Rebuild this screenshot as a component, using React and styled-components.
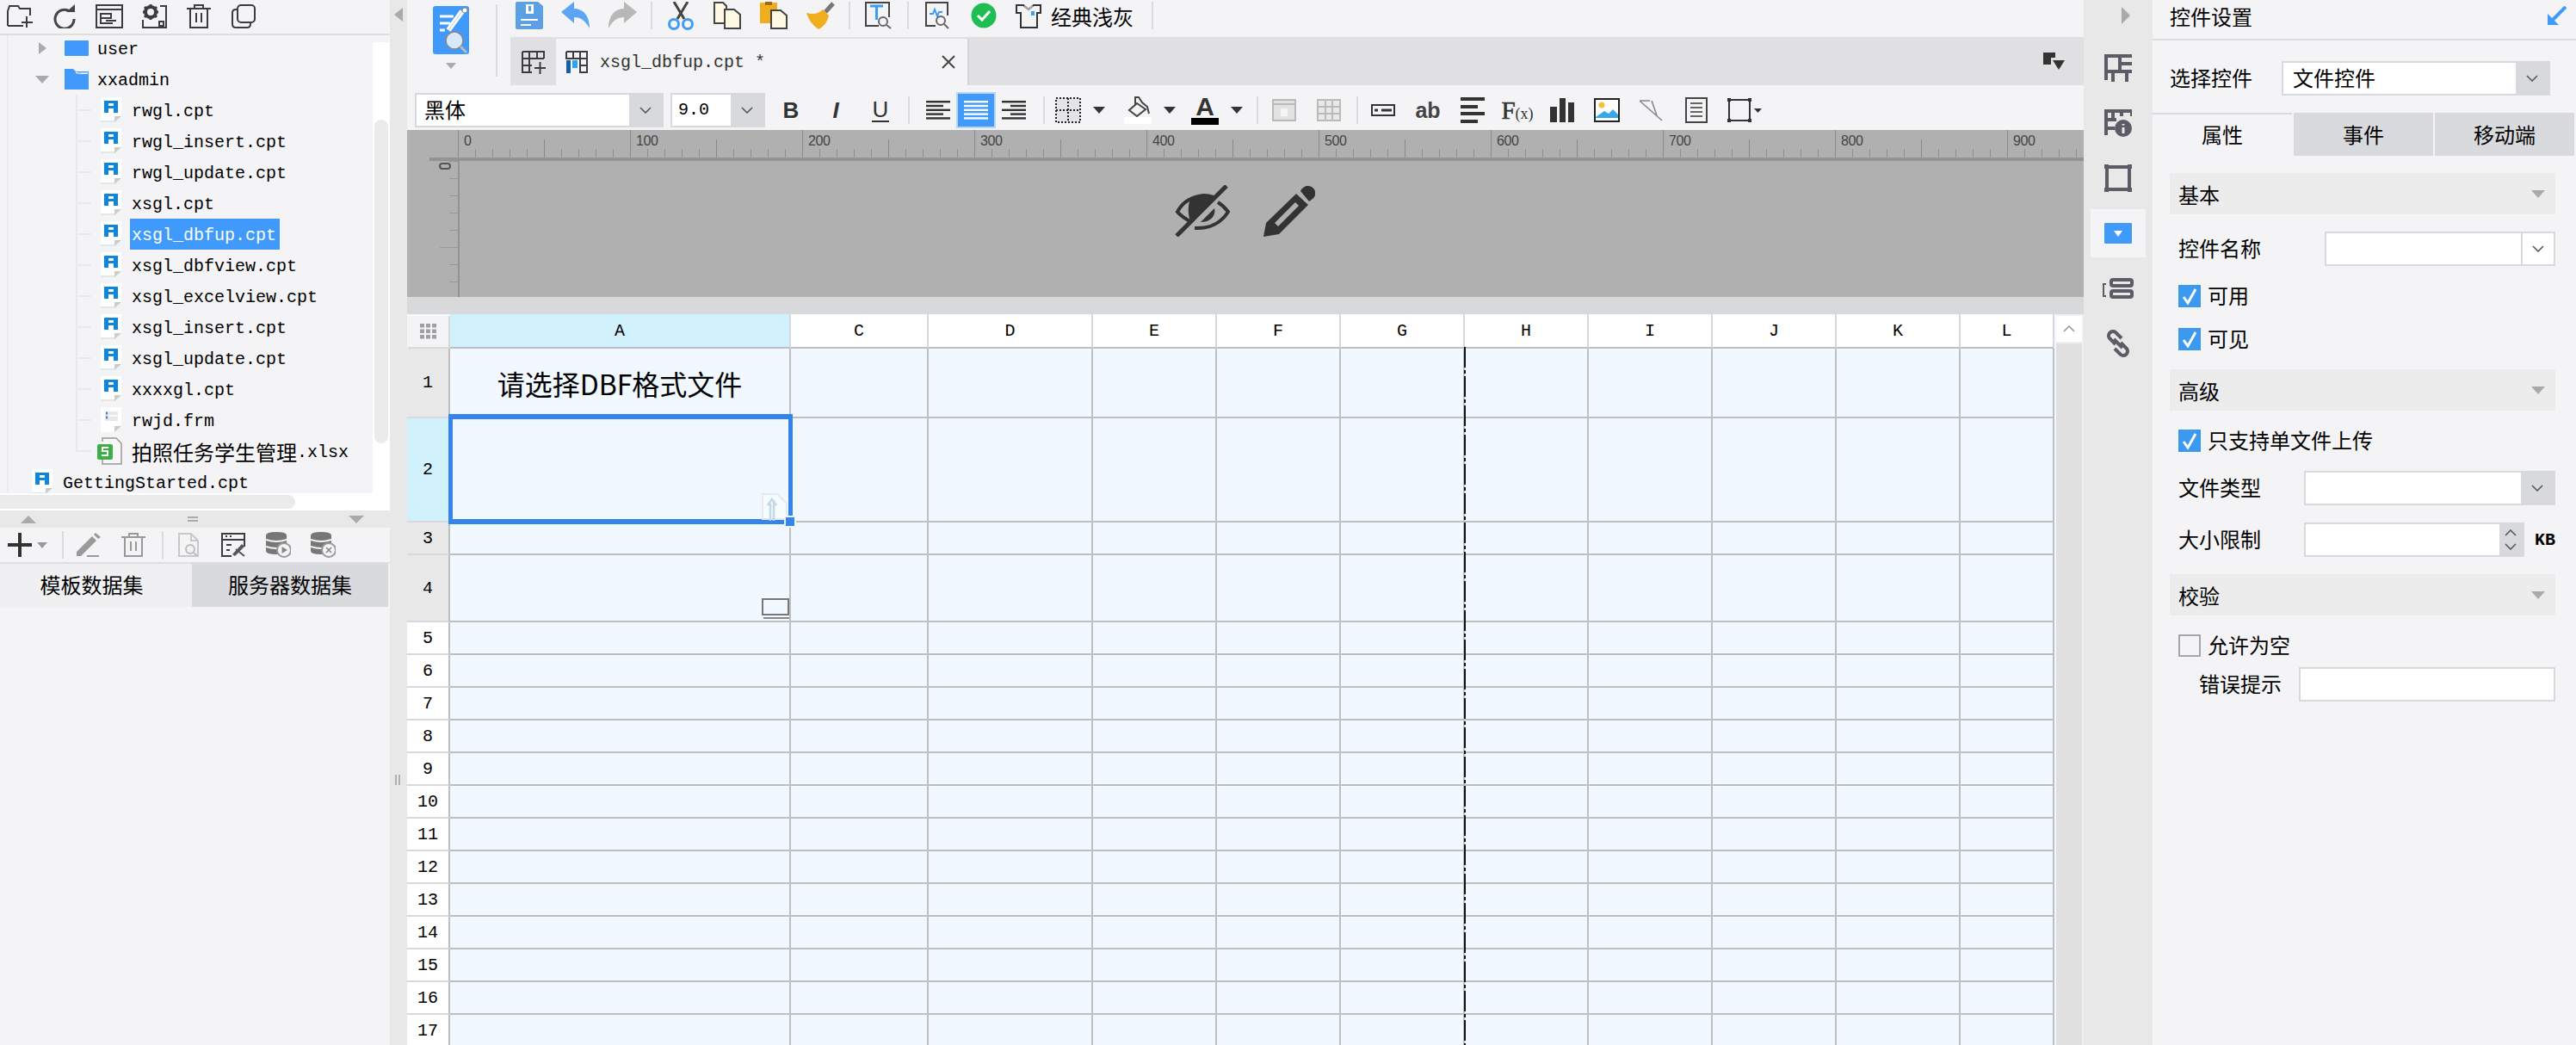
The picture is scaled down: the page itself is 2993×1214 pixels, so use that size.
import React from 'react';
import styled, { createGlobalStyle } from 'styled-components';

const MONO = '"Liberation Mono", "Noto Sans CJK SC", monospace';
const CJK = '"Noto Sans CJK SC", "Noto Sans", sans-serif';

const GlobalStyle = createGlobalStyle`
    html, body { margin: 0; padding: 0; background: #f4f4f6; overflow: hidden; }
    * { box-sizing: border-box; }
    svg { display: block; flex: none; }
`;

const Page = styled.div`
    display: grid;
    grid-template-columns: 453px 20px 1948px 80px 492px;
    width: 2993px;
    height: 1214px;
    overflow: hidden;
    background: #f4f4f6;
    color: #000;
    font-family: ${CJK};
    font-size: 24px;
`;

/* ---------- left panel ---------- */
const LeftPanel = styled.div`
    display: flex;
    flex-direction: column;
    height: 1214px;
`;
const LeftTools = styled.div`
    display: flex;
    align-items: center;
    height: 41px;
    padding: 0 0 2px 0;
    border-bottom: 2px solid #dedee0;
    > :first-child { margin-left: -3px; }
`;
const Slot = styled.div`
    display: flex;
    align-items: center;
    justify-content: center;
    width: ${(p) => p.$w || 52}px;
    height: ${(p) => p.$h || 36}px;
    flex: none;
    margin-left: ${(p) => p.$ml || 0}px;
`;
const TreePane = styled.div`
    display: flex;
    height: 532px;
    overflow: hidden;
`;
const TreeList = styled.div`
    flex: 1;
    margin-top: -3px;
    background: linear-gradient(#ecedef, #ecedef) 8px 0 / 2px 100% no-repeat;
`;
const TreeRow = styled.div`
    display: flex;
    align-items: center;
    height: 36px;
    padding-left: ${(p) => p.$x}px;
    font-family: ${MONO};
    font-size: 20px;
    white-space: pre;
    ${(p) => p.$branch && `
        background:
            linear-gradient(#e9e9eb, #e9e9eb) 88px 50% / 18px 2px no-repeat,
            linear-gradient(#e9e9eb, #e9e9eb) 88px 0 / 2px ${p.$branch === 'last' ? '50%' : '100%'} no-repeat;
    `}
`;
const ArrowBox = styled.div`
    display: flex;
    align-items: center;
    width: ${(p) => p.$w || 34}px;
`;
const FolderBox = styled.div`
    width: 38px;
`;
const FileBox = styled.div`
    width: ${(p) => p.$w || 36}px;
`;
const TreeLabel = styled.span`
    display: flex;
    align-items: center;
    height: 36px;
    margin-left: -2px;
    padding: 2px 4px 0 2px;
    background: ${(p) => (p.$selected ? '#409afb' : 'transparent')};
    color: ${(p) => (p.$selected ? '#fff' : '#000')};
`;
const CjkText = styled.span`
    font-family: ${CJK};
    font-size: 24px;
    margin-top: -2px;
`;
const TreeScroll = styled.div`
    width: 20px;
    margin-top: 8px;
    padding: 90px 2px 0;
    background: #fff;
`;
const ScrollThumb = styled.div`
    height: 376px;
    background: #ebebeb;
    border-radius: 8px;
`;
const TreeHScroll = styled.div`
    height: 20px;
    padding-top: 2px;
    background: #fff;
`;
const HThumb = styled.div`
    width: 343px;
    height: 16px;
    background: #ebebeb;
    border-radius: 0 8px 8px 0;
`;
const SplitBand = styled.div`
    display: flex;
    align-items: center;
    justify-content: space-between;
    height: 20px;
    padding: 0 30px 0 24px;
    background: #e8e8e8;
`;
const Grip = styled.div`
    width: 12px;
    height: 6px;
    border-top: 2px solid #aaa;
    border-bottom: 2px solid #aaa;
`;
const DataTools = styled.div`
    display: flex;
    align-items: center;
    height: 42px;
    padding-left: 9px;
    border-bottom: 2px solid #dedee0;
`;
const LeftTabs = styled.div`
    display: flex;
    height: 50px;
    padding-right: 2px;
`;
const LeftTab = styled.div`
    display: flex;
    align-items: center;
    justify-content: center;
    width: ${(p) => p.$w}px;
    padding: 0 ${(p) => p.$pr || 0}px 3px 0;
    background: ${(p) => (p.$active ? '#f0f0f2' : '#d9dadd')};
`;

/* ---------- splitter ---------- */
const Splitter = styled.div`
    display: flex;
    flex-direction: column;
    align-items: center;
    height: 1214px;
    padding-top: 9px;
    background: #e8e8e8;
`;
const SplitGrip = styled.div`
    width: 6px;
    height: 12px;
    margin-top: 875px;
    margin-left: -2px;
    border-left: 2px solid #b0b0b0;
    border-right: 2px solid #b0b0b0;
`;

/* ---------- centre ---------- */
const Centre = styled.div`
    display: flex;
    flex-direction: column;
    height: 1214px;
    min-width: 0;
`;
const TopBlock = styled.div`
    display: flex;
    height: 99px;
`;
const LogoCol = styled.div`
    display: flex;
    align-items: flex-start;
    width: 115px;
    padding: 5px 0 0 30px;
`;
const LogoStack = styled.div`
    display: flex;
    flex-direction: column;
    align-items: center;
    gap: 10px;
    width: 42px;
    padding-top: 2px;
`;
const TallSep = styled.div`
    width: 2px;
    height: 84px;
    margin-left: 31px;
    background: #dcdcde;
`;
const TopRight = styled.div`
    flex: 1;
    display: flex;
    flex-direction: column;
`;
const MainTools = styled.div`
    display: flex;
    align-items: center;
    height: 43px;
    padding-bottom: 7px;
`;
const ToolSep = styled.div`
    flex: none;
    width: 2px;
    height: 32px;
    margin: 0 ${(p) => p.$r ?? 6}px 0 ${(p) => p.$l ?? 6}px;
    background: #dcdcde;
`;
const ThemeName = styled.span`
    margin-left: 1px;
    width: 96px;
    white-space: nowrap;
`;
const TabBar = styled.div`
    display: flex;
    align-items: stretch;
    justify-content: space-between;
    height: 56px;
    margin-left: 5px;
    background: #e0e0e2;
    padding-top: 2px;
`;
const TabGroup = styled.div`
    display: flex;
`;
const NewTab = styled.div`
    display: flex;
    align-items: center;
    justify-content: center;
    width: 53px;
`;
const DocTab = styled.div`
    display: flex;
    align-items: center;
    width: 480px;
    padding: 0 14px 0 11px;
    background: #f4f4f6;
    border-right: 2px solid #d4d4d6;
    font-family: ${MONO};
    font-size: 20px;
    color: #333;
`;
const DocTabName = styled.span`
    flex: 1;
    margin-left: 14px;
    white-space: pre;
`;
const Corner = styled.div`
    padding: 16px 22px 0 0;
`;
const FormatBar = styled.div`
    display: flex;
    align-items: center;
    height: 52px;
    padding: 6px 0 0 9px;
    background: #f4f4f6;
`;
const Combo = styled.div`
    display: flex;
    flex: ${(p) => (p.$w ? 'none' : 1)};
    width: ${(p) => (p.$w ? `${p.$w}px` : 'auto')};
    height: 40px;
    margin-left: ${(p) => p.$ml || 0}px;
    border: 2px solid #d8d9dc;
    background: #d8d9dc;
`;
const ComboField = styled.div`
    display: flex;
    align-items: center;
    flex: 1;
    min-width: 0;
    padding-left: ${(p) => p.$pl || 0}px;
    padding-bottom: ${(p) => (p.$mono ? 0 : 2)}px;
    background: #fff;
    font-family: ${(p) => (p.$mono ? MONO : CJK)};
    font-size: ${(p) => (p.$mono ? 20 : 24)}px;
    white-space: pre;
    line-height: 1;
`;
const ComboButton = styled.div`
    display: flex;
    flex-direction: column;
    align-items: center;
    justify-content: center;
    gap: ${(p) => p.$gap || 0}px;
    flex: none;
    width: ${(p) => p.$w}px;
    background: ${(p) => (p.$white ? '#fff' : '#d8d9dc')};
    ${(p) => p.$white && 'border-left: 2px solid #d8d9dc;'}
`;
const StyleGlyph = styled.span`
    font-family: "Liberation Sans", sans-serif;
    font-size: 26px;
    font-weight: ${(p) => (p.$bold ? 700 : 400)};
    font-style: ${(p) => (p.$italic ? 'italic' : 'normal')};
    color: #333;
    line-height: 1;
    ${(p) => p.$under && `
        border-bottom: 2px solid #333;
        padding: 0 1px;
    `}
`;
const AlignSlot = styled.div`
    display: flex;
    align-items: center;
    justify-content: center;
    flex: none;
    width: 44px;
    height: 40px;
    margin-left: ${(p) => p.$ml || 0}px;
    background: ${(p) => (p.$active ? '#409afb' : 'transparent')};
    ${(p) => p.$active && 'outline: 2px solid #b8d4f0; outline-offset: -1px;'}
`;
const DropTool = styled.div`
    display: flex;
    align-items: center;
    flex: none;
    gap: 14px;
    width: ${(p) => p.$w}px;
    height: 40px;
`;
const ColorTool = styled.div`
    display: flex;
    flex-direction: column;
    align-items: center;
    width: 32px;
`;
const ColorLetter = styled.span`
    font-family: "Liberation Sans", sans-serif;
    font-weight: 700;
    font-size: 30px;
    line-height: 26px;
    color: #333;
`;
const ColorBar = styled.div`
    width: 32px;
    height: 8px;
    background: ${(p) => p.$color};
`;
const AbText = styled.span`
    font-family: "Liberation Sans", sans-serif;
    font-weight: 700;
    font-size: 25px;
    color: #444;
`;
const FxText = styled.span`
    font-family: "Liberation Serif", serif;
    font-size: 29px;
    color: #333;
    -webkit-text-stroke: 0.6px #333;
    small { font-size: 18px; -webkit-text-stroke: 0; }
`;
const RulerBlock = styled.div`
    height: 194px;
    background: #b0b0b0;
    display: flex;
    flex-direction: column;
`;
const TopRuler = styled.div`
    display: flex;
    height: 32px;
    padding-left: 59px;
    overflow: hidden;
`;
const RulerUnit = styled.div`
    flex: none;
    width: 200px;
    padding: 5px 0 0 7px;
    font-family: "Liberation Sans", sans-serif;
    font-size: 16px;
    letter-spacing: -0.4px;
    line-height: 16px;
    color: #444;
    background:
        linear-gradient(#8a8a8a, #8a8a8a) 0 0 / 1px 100% no-repeat,
        linear-gradient(#8a8a8a, #8a8a8a) 100px 100% / 1px 21px no-repeat,
        repeating-linear-gradient(90deg, #8f8f8f 0 1px, transparent 1px 20px) 0 100% / 100% 10px no-repeat;
`;
const RulerLine = styled.div`
    height: 4px;
    margin-left: 26px;
    background: #939393;
`;
const RulerBody = styled.div`
    flex: 1;
    display: flex;
`;
const SideRuler = styled.div`
    width: 35px;
    margin-left: 26px;
    padding: 2px 0 0 11px;
    border-right: 2px solid #939393;
    background:
        repeating-linear-gradient(180deg, #979797 0 1px, transparent 1px 20px) 100% 0 / 10px 100% no-repeat,
        linear-gradient(#9a9a9a, #9a9a9a) 100% 100px / 21px 1px no-repeat;
`;
const SideRulerMark = styled.div`
    width: 14px;
    height: 8px;
    border: 2px solid #555;
    border-radius: 4px;
`;
const Canvas = styled.div`
    flex: 1;
    display: flex;
    justify-content: center;
    align-items: flex-start;
    gap: 39px;
    padding: 28px 63px 0 0;
`;
const GreyBand = styled.div`
    height: 20px;
    background: #d8d9db;
`;
const SheetArea = styled.div`
    flex: 1;
    display: flex;
    min-height: 0;
`;
const Sheet = styled.div`
    position: relative;
    display: grid;
    grid-template-columns: 50px 396px 160px 191px repeat(7, 144px) 109px;
    grid-template-rows: 40px 81px 121px 38px 78px repeat(13, 38px);
    width: 1914px;
    height: 849px;
    overflow: hidden;
    background: #f1f8ff;
`;
const CornerCell = styled.div`
    display: flex;
    align-items: center;
    justify-content: center;
    margin: 2px 0 0 1px;
    background: #f4f4f6;
    border-right: 2px solid #d8d9db;
    border-bottom: 2px solid #d8d9db;
`;
const ColHead = styled.div`
    display: flex;
    align-items: center;
    justify-content: center;
    background: ${(p) => (p.$active ? '#d0f0fb' : '#fff')};
    border-right: 2px solid #d8d8df;
    border-bottom: 2px solid #bfbfbf;
    font-family: ${MONO};
    font-size: 20px;
`;
const RowHead = styled.div`
    display: flex;
    align-items: center;
    justify-content: center;
    background: ${(p) => ({ on: '#d0f0fb', used: '#e8e8e8', idle: '#fff' }[p.$state])};
    border-right: 2px solid #bfbfbf;
    border-bottom: 2px solid #d8d8df;
    font-family: ${MONO};
    font-size: 20px;
`;
const Cell = styled.div`
    display: flex;
    align-items: center;
    justify-content: center;
    background: #f1f8ff;
    border-right: 2px solid #bfbfbf;
    border-bottom: 2px solid #bfbfbf;
    font-size: 32px;
    white-space: nowrap;
`;
const PageBreak = styled.div`
    position: absolute;
    left: 1228px;
    top: 38px;
    bottom: 0;
    width: 2px;
    background: repeating-linear-gradient(180deg, #111 0 24px, transparent 24px 27px, #111 27px 31px, transparent 31px 34px);
`;
const Selection = styled.div`
    position: absolute;
    left: 48px;
    top: 116px;
    width: 400px;
    height: 128px;
    border: 5px solid #3584ee;
    border-top-width: 6px;
    border-bottom-width: 6px;
`;
const FillHandle = styled.div`
    position: absolute;
    left: 438px;
    top: 234px;
    width: 14px;
    height: 14px;
    background: #3584ee;
    border: 2px solid #f1f8ff;
`;
const CellWidget = styled.div`
    position: absolute;
    left: ${(p) => p.$x}px;
    top: ${(p) => p.$y}px;
`;
const SheetScroll = styled.div`
    display: flex;
    flex-direction: column;
    gap: 2px;
    width: 34px;
    padding-top: 2px;
    background: #f0f0f0;
    border-left: 2px solid #f1f8ff;
    border-right: 2px solid #f0f0f0;
`;
const ScrollUp = styled.div`
    display: flex;
    align-items: center;
    justify-content: center;
    height: 30px;
    background: #fff;
`;
const ScrollTrack = styled.div`
    flex: 1;
    background: #e0e0e0;
`;

/* ---------- rail ---------- */
const Rail = styled.div`
    display: flex;
    flex-direction: column;
    align-items: center;
    height: 1214px;
    background: #e8e8e8;
`;
const RailTop = styled.div`
    display: flex;
    align-items: flex-start;
    height: 47px;
    padding: 8px 0 0 18px;
`;
const RailItem = styled.div`
    display: flex;
    align-items: center;
    justify-content: center;
    width: 64px;
    height: 56px;
    margin: 4px 0;
    background: ${(p) => (p.$active ? '#f4f4f6' : 'transparent')};
`;

/* ---------- right panel ---------- */
const RightPanel = styled.div`
    display: flex;
    flex-direction: column;
    height: 1214px;
`;
const PanelTitle = styled.div`
    display: flex;
    align-items: center;
    justify-content: space-between;
    height: 47px;
    padding: 0 11px 9px 20px;
    border-bottom: 2px solid #dcdcde;
`;
const PickerRow = styled.div`
    display: flex;
    align-items: center;
    height: 84px;
    padding: 4px 30px 0 20px;
`;
const PickerLabel = styled.span`
    width: 130px;
    margin-bottom: 3px;
`;
const PanelTabs = styled.div`
    display: flex;
    gap: 2px;
    height: 50px;
`;
const PanelTab = styled.div`
    display: flex;
    align-items: center;
    justify-content: center;
    width: 162px;
    padding-bottom: 3px;
    background: ${(p) => (p.$active ? '#f4f4f6' : '#d9dadd')};
    border-top: 2px solid #d9dadd;
`;
const PanelBody = styled.div`
    padding: 20px 24px 0 20px;
`;
const SectionHead = styled.div`
    display: flex;
    align-items: center;
    justify-content: space-between;
    height: 48px;
    margin-top: ${(p) => p.$mt || 0}px;
    padding: 0 12px 0 10px;
    background: #ececec;
`;
const FieldRow = styled.div`
    display: flex;
    align-items: center;
    height: 40px;
    margin-top: ${(p) => p.$mt || 0}px;
    padding-left: ${(p) => p.$pl ?? 10}px;
`;
const FieldLabel = styled.span`
    flex: none;
    width: ${(p) => p.$w}px;
    margin-bottom: 3px;
`;
const PlainInput = styled.div`
    flex: 1;
    height: 40px;
    border: 2px solid #d8d9dc;
    background: #fff;
`;
const Unit = styled.span`
    margin-left: 12px;
    font-family: ${MONO};
    font-size: 20px;
    font-weight: 700;
`;
const CheckRow = styled.div`
    display: flex;
    align-items: center;
    gap: 8px;
    height: 26px;
    margin-top: ${(p) => p.$mt || 0}px;
    padding-left: 10px;
`;
const CheckLabel = styled.span`
    margin-bottom: 3px;
`;
const CheckBox = styled.div`
    display: flex;
    align-items: center;
    justify-content: center;
    width: 26px;
    height: 26px;
    background: ${(p) => (p.$on ? '#3b99f0' : '#f4f4f6')};
    ${(p) => !p.$on && 'border: 2px solid #a6a6a6;'}
`;

/* ---------- icons ---------- */
const Chevron = ({ up, color = '#55585e', w = 14 }) => (
    <svg width={w} height="8" viewBox="0 0 14 8">
        <path d={up ? 'M1 7 L7 1 L13 7' : 'M1 1 L7 7 L13 1'} fill="none" stroke={color} strokeWidth="1.6" />
    </svg>
);
const Tri = ({ dir = 'down', color = '#333', w = 12, h = 7 }) => {
    const d = { down: `M0 0 H${w} L${w / 2} ${h} Z`, up: `M0 ${h} H${w} L${w / 2} 0 Z`, left: `M${w} 0 V${h} L0 ${h / 2} Z`, right: `M0 0 V${h} L${w} ${h / 2} Z` }[dir];
    return <svg width={w} height={h} viewBox={`0 0 ${w} ${h}`}><path d={d} fill={color} /></svg>;
};
const S = { fill: 'none', stroke: '#3c3c3e', strokeWidth: 2 };

const NewFolderIcon = () => (
    <svg width="30" height="29" viewBox="0 0 30 29"><path {...S} d="M1 26 V9 L3 3 H13 L15 6 H27 V14 M1 26 H19" /><path {...S} d="M23 15 V28 M17 22 H30" /></svg>
);
const RefreshIcon = () => (
    <svg width="26" height="28" viewBox="0 0 26 28"><path d="M19 8 A11 11 0 1 0 24 17" fill="none" stroke="#444" strokeWidth="3" /><path d="M15 9 H25 V0 Z" fill="#444" /></svg>
);
const PanelIcon = () => (
    <svg width="32" height="28" viewBox="0 0 32 28"><rect {...S} x="1" y="1" width="30" height="26" /><path {...S} d="M1 6 H31" /><path {...S} d="M6 11 H18 V16 H6 Z M6 16 V22 H20 M12 19 H24" /></svg>
);
const GearDocIcon = () => (
    <svg width="30" height="28" viewBox="0 0 30 28"><path {...S} d="M22 2 H29 V27 H2 V18" /><circle cx="11" cy="9" r="6" fill="none" stroke="#3c3c3e" strokeWidth="4" /><path d="M11 0 V3 M11 15 V18 M2 9 H5 M17 9 H20 M4 3 L6 5 M16 13 L18 15 M4 15 L6 13 M16 5 L18 3" stroke="#3c3c3e" strokeWidth="3" /><rect {...S} x="21" y="20" width="5" height="5" /></svg>
);
const TrashIcon = ({ color = '#3c3c3e' }) => (
    <svg width="28" height="28" viewBox="0 0 28 28"><path d="M0 5 H28 M9 5 V1 H19 V5 M4 5 V27 H24 V5 M11 10 V21 M17 10 V21" fill="none" stroke={color} strokeWidth="2" /></svg>
);
const CopyIcon = () => (
    <svg width="28" height="28" viewBox="0 0 28 28"><rect {...S} x="7" y="1" width="20" height="20" rx="4" /><path {...S} d="M7 6 H5 Q1 6 1 10 V23 Q1 27 5 27 H18 Q22 27 22 23 V21" /></svg>
);
const FolderIcon = ({ open }) => (
    <svg width="28" height={open ? 24 : 18} viewBox={open ? '0 0 28 24' : '0 0 28 18'}>
        {open ? <><path d="M0 0 H10 L13 3 H28 V24 H0 Z" fill="#4099fb" /><path d="M13 4 Q16 6 27 5" stroke="#fff" strokeWidth="1.5" fill="none" /></> : <rect width="28" height="18" rx="1" fill="#4099fb" />}
    </svg>
);
const ReportFileIcon = () => (
    <svg width="24" height="30" viewBox="0 0 24 30">
        <path d="M0 0 H24 V20 L16 29 H0 Z" fill="#fff" />
        <path d="M0 27 H16 V29 H0 Z" fill="#e6e6e6" />
        <path d="M16 29 V22 H24 Z" fill="#ccc" />
        <path d="M4 18 V4 H20 V18 H15 V13 H9 V18 Z M9 7 V10 H15 V7 Z" fill="#0f86dd" fillRule="evenodd" />
    </svg>
);
const FormFileIcon = () => (
    <svg width="24" height="30" viewBox="0 0 24 30">
        <path d="M0 0 H24 V20 L16 29 H0 Z" fill="#fff" />
        <path d="M16 29 V22 H24 Z" fill="#ccc" />
        <rect x="5" y="5" width="15" height="11" fill="#e8e8ea" />
        <path d="M6 7 H8 M6 12 H8" stroke="#2a8fe6" strokeWidth="3" />
        <path d="M10 10 H20" stroke="#fff" strokeWidth="1.5" />
    </svg>
);
const SheetFileIcon = () => (
    <svg width="30" height="32" viewBox="0 0 30 32">
        <path d="M6 5 V1 H22 L28 7 V31 H6 V24" fill="#f7f7f7" stroke="#999" strokeWidth="1.5" />
        <rect x="0" y="8" width="18" height="18" rx="2" fill="#3fae49" />
        <path d="M13 12 H6 V16 H12 V21 H5" fill="none" stroke="#fff" strokeWidth="2" />
    </svg>
);
const PencilIcon = ({ color = '#999' }) => (
    <svg width="28" height="28" viewBox="0 0 28 28"><path d="M0 22 L18 4 L23 9 L5 27 L0 27 Z" fill={color} /><path d="M20 2 L22 0 L28 5 L25 7 Z" fill={color} /><path d="M12 27 H26" stroke={color} strokeWidth="2" /></svg>
);
const DocSearchIcon = () => (
    <svg width="24" height="28" viewBox="0 0 24 28"><path d="M1 1 H15 L23 9 V27 H1 Z M15 1 V9 H23" fill="none" stroke="#c9c9c9" strokeWidth="2" /><circle cx="14" cy="19" r="5" fill="none" stroke="#bdbdbd" strokeWidth="2" /><path d="M18 23 L22 27" stroke="#bdbdbd" strokeWidth="2" /></svg>
);
const FormEditIcon = () => (
    <svg width="28" height="28" viewBox="0 0 28 28"><path {...S} d="M27 16 V1 H1 V27 H12 M1 8 H27 M6 14 H12 M6 20 H10" /><path d="M5 4 H7 M10 4 H12" stroke="#3c3c3e" strokeWidth="2" /><path d="M13 25 L24 13 L27 16 L16 27 Z" fill="#555" /><path d="M17 19 L27 27" stroke="#555" strokeWidth="2" /></svg>
);
const DbIcon = ({ mark }) => (
    <svg width="29" height="30" viewBox="0 0 29 30">
        <path d="M0 4 Q0 0 12 0 Q24 0 24 4 V22 Q24 26 12 26 Q0 26 0 22 Z" fill="#777" />
        <path d="M0 9 Q12 13 24 9 M0 17 Q12 21 24 17" stroke="#f4f4f6" strokeWidth="2" fill="none" />
        <circle cx="21" cy="21" r="8" fill="#f4f4f6" stroke="#999" strokeWidth="2" />
        {mark === 'play' ? <path d="M18.5 17 L25 21 L18.5 25 Z" fill="#888" /> : <path d="M18 18 L24 24 M24 18 L18 24" stroke="#888" strokeWidth="1.6" />}
    </svg>
);
const LogoIcon = () => (
    <svg width="42" height="56" viewBox="0 0 42 56">
        <rect width="42" height="56" rx="3" fill="#409afb" />
        <path d="M8 12 H24 M8 20 H20 M8 28 H14" stroke="#fff" strokeWidth="3" />
        <path d="M18 28 L34 6" stroke="#fff" strokeWidth="6" />
        <path d="M18 28 L34 6" stroke="#ccc" strokeWidth="1" />
        <circle cx="37" cy="5" r="3" fill="#fff" stroke="#888" />
        <circle cx="25" cy="40" r="10" fill="#d7e9fa" stroke="#888" strokeWidth="1.5" />
        <path d="M32 47 L39 54" stroke="#bbb" strokeWidth="3" />
    </svg>
);
const SaveIcon = () => (
    <svg width="32" height="32" viewBox="0 0 32 32"><path d="M0 2 Q0 0 2 0 H26 L32 5 V30 Q32 32 30 32 H2 Q0 32 0 30 Z" fill="#5b9fe4" /><rect x="12" y="3" width="9" height="11" fill="#fff" /><rect x="15" y="5" width="3" height="6" fill="#5b9fe4" /><path d="M6 21 H26 M6 27 H18" stroke="#fff" strokeWidth="2" /></svg>
);
const UndoIcon = ({ flip, color }) => (
    <svg width="34" height="32" viewBox="0 0 34 32" style={flip ? { transform: 'scaleX(-1)' } : undefined}><path d="M0 12 L15 0 V8 C26 8 33 17 33 31 C28 22 23 18 15 18 V25 Z" fill={color} /></svg>
);
const ScissorsIcon = () => (
    <svg width="32" height="33" viewBox="0 0 32 33"><path d="M8 0 L20 20 M24 0 L12 20" stroke="#444" strokeWidth="3" /><circle cx="8" cy="26" r="5.5" fill="none" stroke="#3f9bf5" strokeWidth="3" /><circle cx="24" cy="26" r="5.5" fill="none" stroke="#3f9bf5" strokeWidth="3" /></svg>
);
const CopyDocsIcon = () => (
    <svg width="32" height="32" viewBox="0 0 32 32"><path d="M1 1 H11 L15 5 V25 H1 Z" fill="#fff8e4" stroke="#444" strokeWidth="2" /><path d="M13 9 H24 L31 15 V31 H13 Z" fill="#fff8e4" stroke="#444" strokeWidth="2" /></svg>
);
const PasteIcon = () => (
    <svg width="32" height="32" viewBox="0 0 32 32"><rect y="1" width="20" height="24" fill="#f0ae1e" /><rect x="6" y="0" width="8" height="4" fill="#a56a10" /><path d="M13 10 H24 L31 16 V31 H13 Z" fill="#fff8e4" stroke="#444" strokeWidth="2" /></svg>
);
const BrushIcon = () => (
    <svg width="33" height="32" viewBox="0 0 33 32"><path d="M22 12 L31 2" stroke="#777" strokeWidth="5" /><path d="M0 13 C8 15 14 14 19 9 L26 16 C24 24 20 29 14 32 C8 28 3 22 0 13 Z" fill="#f0ae1e" /></svg>
);
const FindTextIcon = () => (
    <svg width="32" height="32" viewBox="0 0 32 32">
        <path d="M28 18 V1 H1 V28 H16" fill="none" stroke="#444" strokeWidth="2" />
        <path d="M6 5 H21 M13.5 5 V21" stroke="#3f9bf5" strokeWidth="3" />
        <circle cx="21" cy="23" r="5" fill="#f4f4f6" stroke="#666" strokeWidth="2" /><path d="M25 27 L30 31" stroke="#666" strokeWidth="2" />
    </svg>
);
const CheckDocIcon = () => (
    <svg width="28" height="32" viewBox="0 0 28 32">
        <path d="M26 16 V1 H1 V28 H12" fill="none" stroke="#444" strokeWidth="2" />
        <path d="M5 14 H9 L11 9 L14 17 L16 12 H20" fill="none" stroke="#3f9bf5" strokeWidth="2" />
        <circle cx="18" cy="22" r="5" fill="#f4f4f6" stroke="#666" strokeWidth="2" /><path d="M22 26 L27 31" stroke="#666" strokeWidth="2" />
    </svg>
);
const GreenCheck = () => (
    <svg width="30" height="30" viewBox="0 0 30 30"><circle cx="15" cy="15" r="14.5" fill="#1fbe52" /><path d="M8 15 L13 20 L22 10" fill="none" stroke="#fff" strokeWidth="3" /></svg>
);
const ShirtIcon = () => (
    <svg width="30" height="29" viewBox="0 0 30 29"><path d="M9 2 H1 V11 H6 V28 H25 V11 H29 V2 H21 L15 7 Z" fill="none" stroke="#333" strokeWidth="2" /><path d="M10 3 L15 7 L20 3" fill="none" stroke="#aaa" strokeWidth="2" /><rect x="18" y="9" width="4" height="5" fill="#409afb" /></svg>
);
const GridPlusIcon = () => (
    <svg width="28" height="27" viewBox="0 0 28 27"><path {...S} d="M1 1 H26 V9 M1 1 V25 H12 M1 9 H26 M1 17 H12 M9 1 V25 M18 1 V9" /><path d="M15 20 H28 M21.5 13 V27" stroke="#3c3c3e" strokeWidth="2" /></svg>
);
const ReportTabIcon = () => (
    <svg width="26" height="26" viewBox="0 0 26 26"><path {...S} d="M1 1 H25 V25 H16 M1 1 V10 M1 9 H25 M9 1 V9 M17 1 V25 M17 17 H25" /><path d="M1 11 H6 V26 H1 Z" fill="#1261a8" /><path d="M8 11 H14 V20 H8 Z" fill="#2aa6ee" /></svg>
);
const CloseIcon = () => (
    <svg width="16" height="16" viewBox="0 0 16 16"><path d="M1 1 L15 15 M15 1 L1 15" stroke="#444" strokeWidth="2" /></svg>
);
const TabMenuIcon = () => (
    <svg width="25" height="20" viewBox="0 0 25 20"><path d="M0 0 H14 V6 H9 V14 H0 Z" fill="#333" /><path d="M11 9 H25 L18 20 Z" fill="#333" /></svg>
);
const AlignIcon = ({ kind, color = '#333' }) => {
    const rows = { left: [28, 20, 28, 20, 28], center: [28, 28, 28, 28, 28], right: [28, 18, 28, 18, 28] }[kind];
    return (
        <svg width="28" height="22" viewBox="0 0 28 22">
            {rows.map((w, i) => {
                const x = kind === 'right' ? 28 - w : 0;
                return <rect key={i} x={x} y={i * 4.8} width={w} height="2.4" fill={color} />;
            })}
        </svg>
    );
};
const BorderIcon = () => (
    <svg width="30" height="30" viewBox="0 0 30 30"><rect x="1" y="1" width="28" height="28" fill="#e4e4e6" stroke="#222" strokeWidth="2" strokeDasharray="2 2" /><path d="M15 1 V29 M1 15 H29" stroke="#222" strokeWidth="2" strokeDasharray="2 2" /></svg>
);
const BucketIcon = () => (
    <svg width="30" height="24" viewBox="0 0 30 24"><path d="M14 8 L5 16 L14 23 L24 15 Z" fill="none" stroke="#444" strokeWidth="2" /><path d="M12 10 V1 H16 L20 7 L26 12 L28 20" fill="none" stroke="#444" strokeWidth="2" /></svg>
);
const MiniFormIcon = () => (
    <svg width="28" height="26" viewBox="0 0 28 26"><rect x="1" y="1" width="26" height="24" fill="#e2e2e2" stroke="#bbb" strokeWidth="2" /><path d="M1 6 H27" stroke="#bbb" strokeWidth="2" /><path d="M10 11 H18 V20 H10 Z" fill="#f4f4f6" /></svg>
);
const MiniTableIcon = () => (
    <svg width="28" height="26" viewBox="0 0 28 26"><rect x="1" y="1" width="26" height="24" fill="#e8e8e8" stroke="#bbb" strokeWidth="2" /><path d="M1 9 H27 M1 17 H27 M10 1 V25 M18 1 V25" stroke="#bbb" strokeWidth="2" /></svg>
);
const FieldIcon = () => (
    <svg width="28" height="14" viewBox="0 0 28 14"><rect x="1" y="1" width="26" height="12" fill="none" stroke="#333" strokeWidth="2" /><path d="M4 7 H8 M12 7 H24" stroke="#333" strokeWidth="3" /></svg>
);
const TextAlignIcon = () => (
    <svg width="28" height="30" viewBox="0 0 28 30"><path d="M0 2 H28 M0 11 H20 M0 19 H28 M0 28 H20" stroke="#333" strokeWidth="4" /></svg>
);
const BarsIcon = () => (
    <svg width="28" height="28" viewBox="0 0 28 28"><path d="M0 10 H8 V28 H0 Z M11 0 H18 V28 H11 Z M21 5 H28 V28 H21 Z" fill="#333" /></svg>
);
const PictureIcon = () => (
    <svg width="30" height="28" viewBox="0 0 30 28"><rect x="1" y="1" width="28" height="26" fill="#fff" stroke="#222" strokeWidth="2" /><circle cx="9" cy="8" r="3.5" fill="#f4c03d" /><path d="M2 22 L12 15 L17 18 L22 13 L28 19 V23 H2 Z" fill="#36a8e8" /></svg>
);
const SlashShapeIcon = () => (
    <svg width="28" height="28" viewBox="0 0 28 28"><path d="M0 3 H12 M0 3 L26 26 M14 3 L20 20" stroke="#888" strokeWidth="1.6" fill="none" /></svg>
);
const NoteIcon = () => (
    <svg width="26" height="30" viewBox="0 0 26 30"><rect x="1" y="1" width="24" height="28" fill="none" stroke="#444" strokeWidth="2" /><path d="M6 7 H20 M6 12 H20 M6 17 H20 M6 22 H20" stroke="#666" strokeWidth="2" /></svg>
);
const ShapeBoxIcon = () => (
    <svg width="40" height="30" viewBox="0 0 40 30"><rect x="2" y="3" width="24" height="24" fill="none" stroke="#333" strokeWidth="2" /><path d="M0 1 H4 V5 H0 Z M24 1 H28 V5 H24 Z M0 25 H4 V29 H0 Z M24 25 H28 V29 H24 Z" fill="#333" /><path d="M31 13 H40 L35.5 18 Z" fill="#333" /></svg>
);
const EyeOffIcon = () => (
    <svg width="64" height="60" viewBox="0 0 64 60">
        <path d="M19 43 C12 39 6 35 3 31 C10 18 22 13 34 12 C38 12 42 13 45 14" fill="none" stroke="#333" strokeWidth="4" />
        <path d="M18 17 C24 13 38 11 46 13 L18 42 C15 34 15 23 18 17 Z" fill="#333" />
        <path d="M50 20 C55 23 59 27 62 31 C54 44 40 51 23 50" fill="none" stroke="#333" strokeWidth="4" />
        <path d="M30 43 L46 27 C48 35 42 43 30 43 Z" fill="#333" />
        <path d="M60 1 L2 59" stroke="#333" strokeWidth="5" />
    </svg>
);
const BigPencilIcon = () => (
    <svg width="60" height="60" viewBox="0 0 60 60">
        <path d="M3 44 L38 10 L52 23 L18 57 L0 60 Z" fill="#333" />
        <path d="M13 44 L37 20 L41 24 L17 48 Z" fill="#b0b0b0" />
        <path d="M43 7 C47 -1 56 0 59 5 C62 10 60 15 53 19 Z" fill="#333" />
    </svg>
);
const DotsIcon = () => (
    <svg width="20" height="18" viewBox="0 0 20 18" fill="#a0a0a0">
        {[0, 7, 14].flatMap((x) => [0, 6.5, 13].map((y) => <rect key={`${x}-${y}`} x={x} y={y} width="5" height="4.5" />))}
    </svg>
);
const UploadGhost = () => (
    <svg width="30" height="32" viewBox="0 0 30 32"><path d="M1 1 H18 L29 12 V30 H1 Z" fill="#f6fbff" stroke="#e2ebf3" strokeWidth="2" /><path d="M10 32 V12 M14 32 V8 M7 14 L12 7 L17 14" stroke="#c0d8e8" strokeWidth="2.5" fill="none" /></svg>
);
const ButtonGhost = () => (
    <svg width="32" height="24" viewBox="0 0 32 24"><rect x="1" y="1" width="30" height="18" fill="none" stroke="#777" strokeWidth="2" /><path d="M2 23 H32" stroke="#888" strokeWidth="2" /></svg>
);
const R = { fill: 'none', stroke: '#5c5c66', strokeWidth: 4 };
const RailFrameIcon = () => (
    <svg width="32" height="32" viewBox="0 0 32 32"><path {...R} d="M2 30 V2 H32 M2 20 H32 M18 2 V20 M18 11 H32 M10 20 V32 M26 20 V32" /></svg>
);
const RailInfoIcon = () => (
    <svg width="32" height="32" viewBox="0 0 32 32"><path {...R} d="M2 30 V2 H32 V8 M2 12 H14 M2 22 H12 M10 2 V12 M20 2 V8" /><circle cx="22" cy="22" r="10" fill="#5c5c66" /><path d="M22 17 V18.5 M22 21 V28" stroke="#e8e8e8" strokeWidth="3" /></svg>
);
const RailBoxIcon = () => (
    <svg width="32" height="32" viewBox="0 0 32 32"><rect {...R} x="3" y="3" width="26" height="26" /><path d="M0 0 H5 V5 H0 Z M27 0 H32 V5 H27 Z M0 27 H5 V32 H0 Z M27 27 H32 V32 H27 Z" fill="#5c5c66" /></svg>
);
const RailWidgetIcon = () => (
    <svg width="32" height="24" viewBox="0 0 32 24"><rect width="32" height="24" rx="1" fill="#409afb" /><path d="M11 9 H21 L16 16 Z" fill="#fff" /></svg>
);
const RailFormIcon = () => (
    <svg width="36" height="24" viewBox="0 0 36 24"><path d="M4 7 H1 V21 H4" fill="none" stroke="#5c5c66" strokeWidth="2" /><rect {...R} x="10" y="2" width="24" height="7" rx="2" /><rect {...R} x="10" y="15" width="24" height="7" rx="2" /></svg>
);
const RailLinkIcon = () => (
    <svg width="32" height="32" viewBox="0 0 32 32"><path {...R} d="M13 17 L6 10 A5 5 0 0 1 13 3 L20 10 M19 15 L26 22 A5 5 0 0 1 19 29 L12 22" /><path {...R} d="M11 11 L21 21" /></svg>
);
const TickIcon = () => (
    <svg width="18" height="20" viewBox="0 0 18 20"><path d="M2 11 L7 18 L16 2" fill="none" stroke="#fff" strokeWidth="3" /></svg>
);
const BackArrowIcon = () => (
    <svg width="22" height="22" viewBox="0 0 22 22"><path d="M21 1 L5 17" stroke="#409afb" strokeWidth="4" /><path d="M0 9 V22 H13 Z" fill="#409afb" /></svg>
);

/* ---------- data ---------- */
const FILES = [
    ['rwgl', 'rwgl.cpt'], ['rwgl_insert', 'rwgl_insert.cpt'], ['rwgl_update', 'rwgl_update.cpt'],
    ['xsgl', 'xsgl.cpt'], ['xsgl_dbfup', 'xsgl_dbfup.cpt'], ['xsgl_dbfview', 'xsgl_dbfview.cpt'],
    ['xsgl_excelview', 'xsgl_excelview.cpt'], ['xsgl_insert', 'xsgl_insert.cpt'],
    ['xsgl_update', 'xsgl_update.cpt'], ['xxxxgl', 'xxxxgl.cpt'],
];
const COLS = ['A', 'C', 'D', 'E', 'F', 'G', 'H', 'I', 'J', 'K', 'L'];
const ROWS = Array.from({ length: 17 }, (_, i) => i + 1);
const rowState = (n) => (n === 2 ? 'on' : n <= 4 ? 'used' : 'idle');
const RULER = [0, 100, 200, 300, 400, 500, 600, 700, 800, 900];

const Tree = () => (
    <TreeList>
        <TreeRow $x={45}>
            <ArrowBox $w={30}><Tri dir="right" color="#aaa" w={9} h={14} /></ArrowBox>
            <FolderBox><FolderIcon /></FolderBox>
            <TreeLabel>user</TreeLabel>
        </TreeRow>
        <TreeRow $x={41}>
            <ArrowBox><Tri color="#aaa" w={16} h={9} /></ArrowBox>
            <FolderBox><FolderIcon open /></FolderBox>
            <TreeLabel>xxadmin</TreeLabel>
        </TreeRow>
        {FILES.map(([id, name]) => (
            <TreeRow key={id} $x={117} $branch="mid">
                <FileBox><ReportFileIcon /></FileBox>
                <TreeLabel $selected={id === 'xsgl_dbfup'}>{name}</TreeLabel>
            </TreeRow>
        ))}
        <TreeRow $x={117} $branch="mid">
            <FileBox><FormFileIcon /></FileBox>
            <TreeLabel>rwjd.frm</TreeLabel>
        </TreeRow>
        <TreeRow $x={113} $branch="last">
            <FileBox $w={40}><SheetFileIcon /></FileBox>
            <TreeLabel><CjkText>拍照任务学生管理</CjkText>.xlsx</TreeLabel>
        </TreeRow>
        <TreeRow $x={37}>
            <FileBox><ReportFileIcon /></FileBox>
            <TreeLabel>GettingStarted.cpt</TreeLabel>
        </TreeRow>
    </TreeList>
);

const Left = () => (
    <LeftPanel>
        <LeftTools>
            <Slot><NewFolderIcon /></Slot>
            <Slot><RefreshIcon /></Slot>
            <Slot><PanelIcon /></Slot>
            <Slot><GearDocIcon /></Slot>
            <Slot><TrashIcon /></Slot>
            <Slot><CopyIcon /></Slot>
        </LeftTools>
        <TreePane>
            <Tree />
            <TreeScroll><ScrollThumb /></TreeScroll>
        </TreePane>
        <TreeHScroll><HThumb /></TreeHScroll>
        <SplitBand>
            <Tri dir="up" color="#aaa" w={18} h={9} />
            <Grip />
            <Tri color="#aaa" w={18} h={9} />
        </SplitBand>
        <DataTools>
            <svg width="28" height="28" viewBox="0 0 28 28"><path d="M0 14 H28 M14 0 V28" stroke="#333" strokeWidth="4" /></svg>
            <Slot $w={16} $ml={4}><Tri color="#999" w={12} h={7} /></Slot>
            <ToolSep $l={15} $r={3} />
            <Slot><PencilIcon /></Slot>
            <Slot><TrashIcon color="#999" /></Slot>
            <ToolSep $l={7} $r={3} />
            <Slot><DocSearchIcon /></Slot>
            <Slot><FormEditIcon /></Slot>
            <Slot><DbIcon mark="play" /></Slot>
            <Slot><DbIcon mark="stop" /></Slot>
        </DataTools>
        <LeftTabs>
            <LeftTab $w={223} $pr={10} $active>模板数据集</LeftTab>
            <LeftTab $w={228}>服务器数据集</LeftTab>
        </LeftTabs>
    </LeftPanel>
);

const Header = () => (
    <TopBlock>
        <LogoCol>
            <LogoStack>
                <LogoIcon />
                <Tri color="#aaa" w={12} h={7} />
            </LogoStack>
            <TallSep />
        </LogoCol>
        <TopRight>
            <MainTools>
                <Slot $w={54}><SaveIcon /></Slot>
                <Slot $w={54}><UndoIcon color="#5aa5f5" /></Slot>
                <Slot $w={54}><UndoIcon flip color="#b8b8b8" /></Slot>
                <ToolSep />
                <Slot $w={54}><ScissorsIcon /></Slot>
                <Slot $w={54}><CopyDocsIcon /></Slot>
                <Slot $w={54}><PasteIcon /></Slot>
                <Slot $w={54}><BrushIcon /></Slot>
                <ToolSep />
                <Slot $w={54}><FindTextIcon /></Slot>
                <ToolSep />
                <Slot $w={54}><CheckDocIcon /></Slot>
                <Slot $w={54}><GreenCheck /></Slot>
                <Slot $w={50}><ShirtIcon /></Slot>
                <ThemeName>经典浅灰</ThemeName>
                <ToolSep $l={21} $r={0} />
            </MainTools>
            <TabBar>
                <TabGroup>
                    <NewTab><GridPlusIcon /></NewTab>
                    <DocTab>
                        <ReportTabIcon />
                        <DocTabName>xsgl_dbfup.cpt *</DocTabName>
                        <CloseIcon />
                    </DocTab>
                </TabGroup>
                <Corner><TabMenuIcon /></Corner>
            </TabBar>
        </TopRight>
    </TopBlock>
);

const Format = () => (
    <FormatBar>
        <Combo $w={289}>
            <ComboField $pl={9}>黑体</ComboField>
            <ComboButton $w={38}><Chevron /></ComboButton>
        </Combo>
        <Combo $w={110} $ml={8}>
            <ComboField $mono $pl={7}>9.0</ComboField>
            <ComboButton $w={38}><Chevron /></ComboButton>
        </Combo>
        <Slot $ml={4}><StyleGlyph $bold>B</StyleGlyph></Slot>
        <Slot><StyleGlyph $italic $bold>I</StyleGlyph></Slot>
        <Slot><StyleGlyph $under>U</StyleGlyph></Slot>
        <ToolSep />
        <AlignSlot $ml={5}><AlignIcon kind="left" /></AlignSlot>
        <AlignSlot $active><AlignIcon kind="center" color="#fff" /></AlignSlot>
        <AlignSlot><AlignIcon kind="right" /></AlignSlot>
        <ToolSep $l={12} $r={12} />
        <DropTool $w={80}><BorderIcon /><Tri w={14} h={8} /></DropTool>
        <DropTool $w={78}>
            <ColorTool><BucketIcon /><ColorBar $color="#fff" /></ColorTool>
            <Tri w={14} h={8} />
        </DropTool>
        <DropTool $w={64}>
            <ColorTool><ColorLetter>A</ColorLetter><ColorBar $color="#000" /></ColorTool>
            <Tri w={14} h={8} />
        </DropTool>
        <ToolSep $l={12} $r={4} />
        <Slot><MiniFormIcon /></Slot>
        <Slot><MiniTableIcon /></Slot>
        <ToolSep $l={6} $r={3} />
        <Slot><FieldIcon /></Slot>
        <Slot><AbText>ab</AbText></Slot>
        <Slot><TextAlignIcon /></Slot>
        <Slot><FxText>F<small>(x)</small></FxText></Slot>
        <Slot><BarsIcon /></Slot>
        <Slot><PictureIcon /></Slot>
        <Slot><SlashShapeIcon /></Slot>
        <Slot><NoteIcon /></Slot>
        <Slot $w={60}><ShapeBoxIcon /></Slot>
    </FormatBar>
);

const Rulers = () => (
    <RulerBlock>
        <TopRuler>
            {RULER.map((n) => <RulerUnit key={n}>{n}</RulerUnit>)}
        </TopRuler>
        <RulerLine />
        <RulerBody>
            <SideRuler><SideRulerMark /></SideRuler>
            <Canvas>
                <EyeOffIcon />
                <BigPencilIcon />
            </Canvas>
        </RulerBody>
    </RulerBlock>
);

const Grid = () => (
    <SheetArea>
        <Sheet>
            <CornerCell><DotsIcon /></CornerCell>
            {COLS.map((c) => <ColHead key={c} $active={c === 'A'}>{c}</ColHead>)}
            {ROWS.map((r) => (
                <React.Fragment key={r}>
                    <RowHead $state={rowState(r)}>{r}</RowHead>
                    {COLS.map((c) => (
                        <Cell key={c}>{r === 1 && c === 'A' ? '请选择DBF格式文件' : null}</Cell>
                    ))}
                </React.Fragment>
            ))}
            <PageBreak />
            <Selection />
            <CellWidget $x={412} $y={208}><UploadGhost /></CellWidget>
            <FillHandle />
            <CellWidget $x={412} $y={330}><ButtonGhost /></CellWidget>
        </Sheet>
        <SheetScroll>
            <ScrollUp><Chevron up color="#999" w={18} /></ScrollUp>
            <ScrollTrack />
        </SheetScroll>
    </SheetArea>
);

const Check = ({ on, children, mt }) => (
    <CheckRow $mt={mt}>
        <CheckBox $on={on}>{on && <TickIcon />}</CheckBox>
        <CheckLabel>{children}</CheckLabel>
    </CheckRow>
);

const Section = ({ title, mt }) => (
    <SectionHead $mt={mt}>
        <span>{title}</span>
        <Tri color="#aaa" w={16} h={9} />
    </SectionHead>
);

const Settings = () => (
    <RightPanel>
        <PanelTitle>
            <span>控件设置</span>
            <BackArrowIcon />
        </PanelTitle>
        <PickerRow>
            <PickerLabel>选择控件</PickerLabel>
            <Combo>
                <ComboField $pl={11}>文件控件</ComboField>
                <ComboButton $w={38}><Chevron /></ComboButton>
            </Combo>
        </PickerRow>
        <PanelTabs>
            <PanelTab $active>属性</PanelTab>
            <PanelTab>事件</PanelTab>
            <PanelTab>移动端</PanelTab>
        </PanelTabs>
        <PanelBody>
            <Section title="基本" />
            <FieldRow $mt={20}>
                <FieldLabel $w={170}>控件名称</FieldLabel>
                <Combo>
                    <ComboField />
                    <ComboButton $w={38} $white><Chevron /></ComboButton>
                </Combo>
            </FieldRow>
            <Check on mt={22}>可用</Check>
            <Check on mt={24}>可见</Check>
            <Section title="高级" mt={22} />
            <Check on mt={22}>只支持单文件上传</Check>
            <FieldRow $mt={22}>
                <FieldLabel $w={146}>文件类型</FieldLabel>
                <Combo>
                    <ComboField />
                    <ComboButton $w={38}><Chevron /></ComboButton>
                </Combo>
            </FieldRow>
            <FieldRow $mt={20}>
                <FieldLabel $w={146}>大小限制</FieldLabel>
                <Combo>
                    <ComboField />
                    <ComboButton $w={27} $gap={8}><Chevron up /><Chevron /></ComboButton>
                </Combo>
                <Unit>KB</Unit>
            </FieldRow>
            <Section title="校验" mt={20} />
            <Check mt={22}>允许为空</Check>
            <FieldRow $mt={12} $pl={34}>
                <FieldLabel $w={116}>错误提示</FieldLabel>
                <PlainInput />
            </FieldRow>
        </PanelBody>
    </RightPanel>
);

export default function App() {
    return (
        <>
            <GlobalStyle />
            <Page>
                <Left />
                <Splitter>
                    <Tri dir="left" color="#aaa" w={10} h={16} />
                    <SplitGrip />
                </Splitter>
                <Centre>
                    <Header />
                    <Format />
                    <Rulers />
                    <GreyBand />
                    <Grid />
                </Centre>
                <Rail>
                    <RailTop><Tri dir="right" color="#aaa" w={10} h={20} /></RailTop>
                    <RailItem><RailFrameIcon /></RailItem>
                    <RailItem><RailInfoIcon /></RailItem>
                    <RailItem><RailBoxIcon /></RailItem>
                    <RailItem $active><RailWidgetIcon /></RailItem>
                    <RailItem><RailFormIcon /></RailItem>
                    <RailItem><RailLinkIcon /></RailItem>
                </Rail>
                <Settings />
            </Page>
        </>
    );
}
